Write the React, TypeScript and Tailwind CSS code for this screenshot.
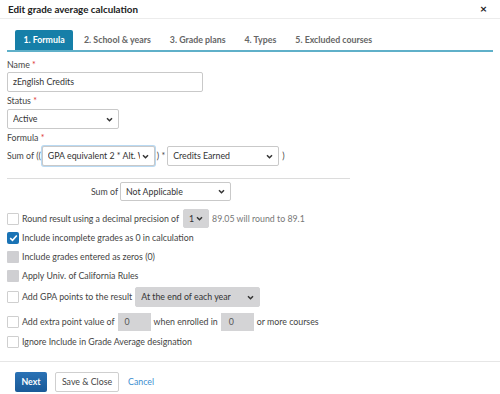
import React from "react";

const tabs = ["1. Formula", "2. School & years", "3. Grade plans", "4. Types", "5. Excluded courses"];

function Caret() {
  return (
    <svg width="7" height="5" viewBox="0 0 8 6" className="shrink-0">
      <path d="M1 1.5 L4 4.5 L7 1.5" stroke="#333" strokeWidth="1.8" fill="none" />
    </svg>
  );
}

function Select({ value, className, gray, focus }: { value: string; className: string; gray?: boolean; focus?: boolean }) {
  return (
    <div
      className={
        "flex items-center justify-between gap-[2px] px-[5px] border rounded-[2px] " +
        (gray ? "bg-[#d4d4d6] border-[#d4d4d6] " : "bg-white border-[#c9c9c9] ") +
        (focus ? "border-[#5a9fd6] shadow-[0_0_0_1px_#b9d9f2] " : "") +
        className
      }
    >
      <span className="overflow-hidden whitespace-nowrap text-[#333]">{value}</span>
      <Caret />
    </div>
  );
}

function Box({ state }: { state: "empty" | "checked" | "gray" }) {
  if (state === "checked")
    return (
      <div className="w-[12px] h-[12px] rounded-[2px] bg-[#1a73b5] flex items-center justify-center shrink-0">
        <svg width="9" height="8" viewBox="0 0 9 8">
          <path d="M1.2 4.2 L3.5 6.3 L7.8 1.5" stroke="white" strokeWidth="1.6" fill="none" />
        </svg>
      </div>
    );
  if (state === "gray") return <div className="w-[12px] h-[12px] rounded-[1px] bg-[#cfcfd2] shrink-0" />;
  return <div className="w-[12px] h-[12px] rounded-[1px] border border-[#cfcfcf] bg-white shrink-0" />;
}

export default function App() {
  return (
    <div className="w-[500px] h-[394px] bg-white text-[8.8px] text-[#444] overflow-hidden" style={{ fontFamily: "Lato, 'Open Sans', sans-serif" }}>
      <div className="flex items-center justify-between h-[19px] px-[8px] border-b border-[#ececec]">
        <span className="text-[9.8px] font-bold text-[#222]">Edit grade average calculation</span>
        <span className="text-[12px] font-bold text-[#222] mr-[5px]">×</span>
      </div>

      <div className="mx-[7px] mt-[12px] flex items-end border-b-[2px] border-[#5fb0c9] h-[21px]">
        {tabs.map((t, i) =>
          i === 0 ? (
            <div key={t} className="ml-[8px] w-[58px] h-[20px] bg-[#167fa8] rounded-t-[2px] text-white text-[8.8px] font-bold flex items-center justify-center">
              {t}
            </div>
          ) : (
            <div key={t} className="h-[20px] flex items-center font-bold text-[8.8px] text-[#666] ml-[11px] mr-[8px]">
              {t}
            </div>
          )
        )}
      </div>

      <div className="px-[7px] pt-[7px]">
        <div className="h-[12px] leading-[12px]">Name <span className="text-[#d33]">*</span></div>
        <div className="w-[196px] h-[20px] mt-[1px] border border-[#c9c9c9] rounded-[2px] flex items-center px-[5px] text-[#333]">zEnglish Credits</div>
        <div className="h-[12px] leading-[12px] mt-[3px]">Status <span className="text-[#d33]">*</span></div>
        <Select value="Active" className="w-[112px] h-[20px] mt-[2px]" />
        <div className="h-[12px] leading-[12px] mt-[3px]">Formula <span className="text-[#d33]">*</span></div>
        <div className="flex items-center mt-[2px] h-[20px]">
          <span className="mr-[1px]">Sum of ((</span>
          <Select value="GPA equivalent 2 * Alt. Weighted" focus className="w-[113px] h-[20px]" />
          <span className="mx-[2px]">) *</span>
          <Select value="Credits Earned" className="w-[112px] h-[20px]" />
          <span className="ml-[3px]">)</span>
        </div>

        <div className="w-[343px] border-t border-[#dcdcdc] mt-[12px]" />
        <div className="flex items-center h-[19px] mt-[3px]">
          <span className="w-[113px] text-right pr-[2px]">Sum of</span>
          <Select value="Not Applicable" className="w-[111px] h-[19px]" />
        </div>

        <div className="flex items-center h-[19px] mt-[8px] gap-[3px]">
          <Box state="empty" />
          <span>Round result using a decimal precision of</span>
          <Select value="1" gray className="w-[26px] h-[19px] ml-[1px]" />
          <span className="text-[#777]">89.05 will round to 89.1</span>
        </div>
        <div className="flex items-center h-[14px] mt-[3px] gap-[3px]">
          <Box state="checked" />
          <span>Include incomplete grades as 0 in calculation</span>
        </div>
        <div className="flex items-center h-[14px] mt-[5px] gap-[3px]">
          <Box state="gray" />
          <span>Include grades entered as zeros (0)</span>
        </div>
        <div className="flex items-center h-[14px] mt-[5px] gap-[3px]">
          <Box state="gray" />
          <span>Apply Univ. of California Rules</span>
        </div>
        <div className="flex items-center h-[20px] mt-[4px] gap-[3px]">
          <Box state="empty" />
          <span>Add GPA points to the result</span>
          <Select value="At the end of each year" gray className="w-[125px] h-[20px]" />
        </div>
        <div className="flex items-center h-[18px] mt-[6px] gap-[3px]">
          <Box state="empty" />
          <span>Add extra point value of</span>
          <div className="w-[33px] h-[18px] bg-[#d4d4d6] flex items-center px-[7px] text-[#555]">0</div>
          <span>when enrolled in</span>
          <div className="w-[33px] h-[18px] bg-[#d4d4d6] flex items-center px-[8px] text-[#555]">0</div>
          <span>or more courses</span>
        </div>
        <div className="flex items-center h-[14px] mt-[4px] gap-[3px]">
          <Box state="empty" />
          <span>Ignore Include in Grade Average designation</span>
        </div>
      </div>

      <div className="border-t border-[#e6e6e6] mt-[12px]" />
      <div className="flex items-center px-[15px] mt-[10px] gap-[8px]">
        <div className="w-[32px] h-[20px] rounded-[2px] bg-gradient-to-b from-[#2a72b5] to-[#1a5a98] text-white font-bold flex items-center justify-center">Next</div>
        <div className="w-[64px] h-[20px] rounded-[2px] border border-[#cfcfcf] bg-white text-[#444] flex items-center justify-center">Save &amp; Close</div>
        <span className="text-[#3b8ed0] ml-[1px]">Cancel</span>
      </div>
    </div>
  );
}
